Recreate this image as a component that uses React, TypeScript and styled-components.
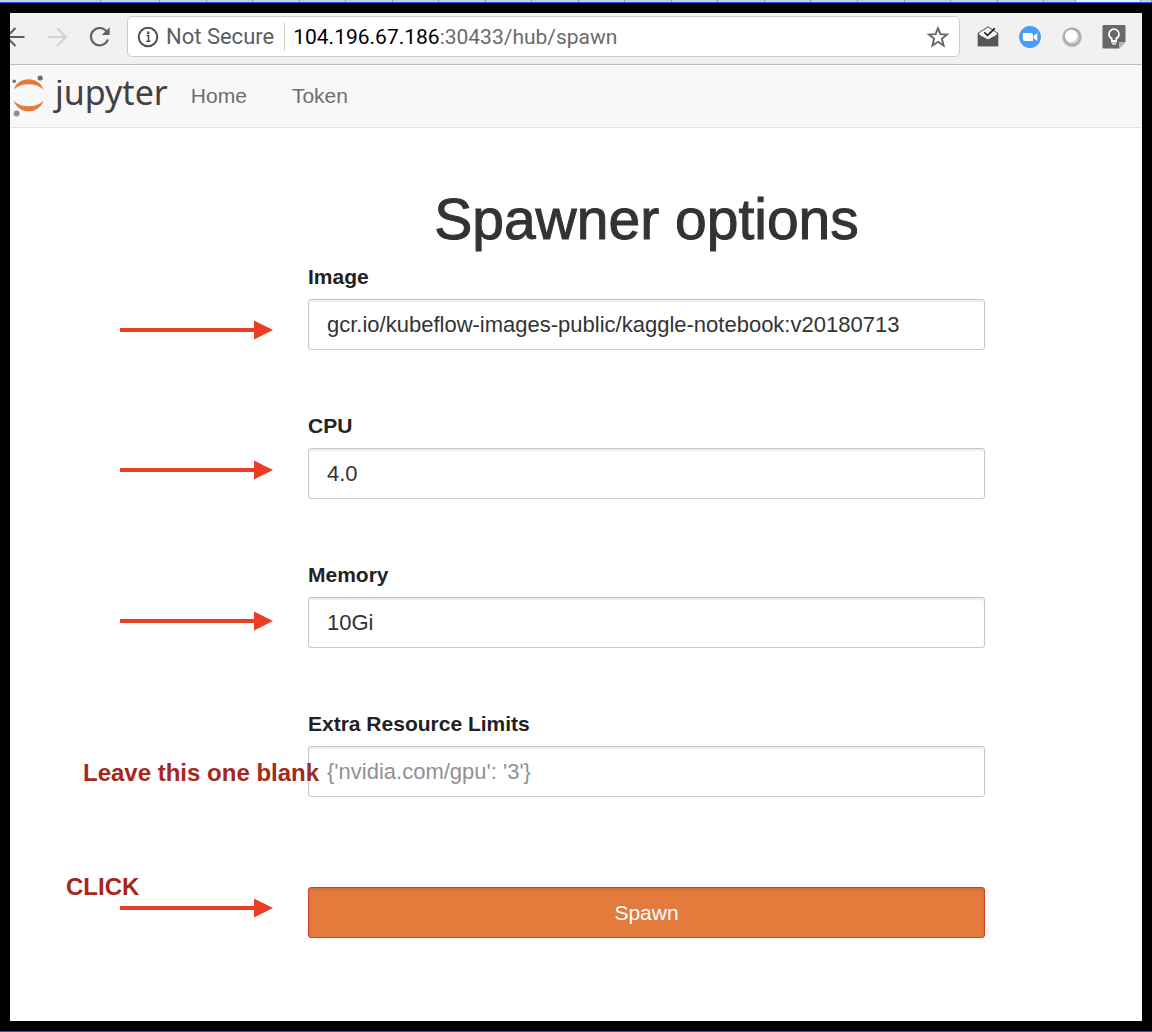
import React from "react";
import styled, { createGlobalStyle } from "styled-components";

const sans = `"Liberation Sans", Arial, Helvetica, sans-serif`;
const chromeFont = `Roboto, "Liberation Sans", sans-serif`;

const GlobalStyle = createGlobalStyle`
  *, *::before, *::after { box-sizing: border-box; }
  body { margin: 0; background: #000; font-family: ${sans}; color: #333; }
`;

const Desktop = styled.div`
  display: flex;
  flex-direction: column;
  min-height: 100vh;
  background: #000;
  border-bottom: 1px solid #2a55c8;
`;

const TabStrip = styled.div`
  display: flex;
  height: 3px;
  background: #cfd2d8;
  border-bottom: 1px solid #1f55f0;
`;

const Tab = styled.span<{ $width?: number; $active?: boolean }>`
  flex: ${(p) => (p.$width ? `0 0 ${p.$width}px` : "1 1 0")};
  background: ${(p) => (p.$active ? "#f3f3f5" : "transparent")};
  border-right: 1px solid #9a9da4;
`;

const Window = styled.div`
  position: relative;
  flex: 1;
  margin: 10px;
  background: #fff;
  overflow: hidden;
`;

const Toolbar = styled.div`
  display: flex;
  align-items: center;
  height: 52px;
  padding-bottom: 4px;
  background: #f1f1f1;
  border-bottom: 1px solid #bdbdbd;
`;

const ToolButton = styled.button<{ $width: number }>`
  display: flex;
  flex: 0 0 ${(p) => p.$width}px;
  align-items: center;
  height: 42px;
  padding: 0;
  border: 0;
  background: none;
  justify-content: ${(p) => (p.$width === 42 ? "center" : "flex-start")};
`;

const AddressBar = styled.div`
  display: flex;
  flex: 1;
  align-items: center;
  height: 41px;
  margin-right: 7px;
  padding-left: 9px;
  border: 1px solid #cdcdcd;
  border-radius: 5px;
  background: #fff;
  font: 22px/28px ${chromeFont};
  color: #5a5d63;
`;

const Security = styled.span`
  margin-left: 7px;
  padding-right: 10px;
  border-right: 1px solid #cfcfcf;
`;

const Address = styled.span`
  flex: 1;
  margin-left: 8px;
  color: #6a6a6a;
  font-size: 21px;
`;

const Host = styled.span`
  color: #000;
`;

const Extensions = styled.div`
  display: flex;
  margin-right: 7px;
`;

const Navbar = styled.nav`
  display: flex;
  align-items: center;
  height: 63px;
  background: #f8f8f8;
  border-bottom: 1px solid #e4e4e4;
  font-size: 21px;
  line-height: 30px;
`;

const Brand = styled.a`
  display: flex;
  align-items: center;
  margin-right: 23px;
  color: #414042;
  text-decoration: none;
`;

/* The wordmark has no dot on its j: the top of the line box is clipped. */
const Wordmark = styled.span`
  margin-left: 9px;
  padding-bottom: 8px;
  clip-path: inset(11px 0 0 -8px);
  font: 34px/46px "Noto Sans", "Open Sans", sans-serif;
`;

const NavLink = styled.a`
  margin-right: 45px;
  color: #6e6e6e;
  text-decoration: none;
`;

const Spawner = styled.main`
  display: grid;
  grid-template-columns: 298fr 677fr 157fr;
  padding: 60px 0;
`;

const Form = styled.form`
  grid-column: 2;
`;

const Title = styled.h1`
  margin: 0 0 12px;
  font-size: 57px;
  font-weight: 400;
  line-height: 62px;
  text-align: center;
  -webkit-text-stroke: 1px #333;
`;

const Group = styled.div`
  margin-bottom: 61px;
`;

const Label = styled.label`
  display: block;
  margin-bottom: 7px;
  color: #222;
  font-size: 21px;
  font-weight: 700;
  line-height: 30px;
`;

const Input = styled.input`
  display: block;
  width: 100%;
  height: 51px;
  padding: 0 18px;
  border: 1px solid #c6c6c6;
  border-radius: 3px;
  background: #fff;
  box-shadow: inset 0 2px 2px rgba(0, 0, 0, 0.07);
  color: #333;
  font: 22px/30px ${sans};
  &::placeholder { color: #919191; opacity: 1; }
`;

const Submit = styled.button`
  width: 100%;
  height: 51px;
  margin-top: 29px;
  border: 1px solid #d2402a;
  border-radius: 3px;
  background: #e47a3c;
  box-shadow: inset 0 2px 3px rgba(0, 0, 0, 0.1);
  color: #fff;
  font: 21px/30px ${sans};
`;

/* Hand-placed mark-up drawn over the window. */
const ArrowMark = styled.svg<{ $top: number }>`
  position: absolute;
  left: 110px;
  top: ${(p) => p.$top}px;
`;

const Note = styled.span<{ $left: number; $top: number }>`
  position: absolute;
  left: ${(p) => p.$left}px;
  top: ${(p) => p.$top}px;
  color: #a5281b;
  font-size: 24px;
  font-weight: 700;
  line-height: 28px;
  white-space: nowrap;
`;

const BackIcon = () => (
  <svg width="16" height="22" viewBox="0 0 16 22" fill="none" stroke="#5a5d63" strokeWidth="2">
    <path d="M14.500 11H-4M5.500 2L-3.500 11L5.500 20" />
  </svg>
);

const ForwardIcon = () => (
  <svg width="20" height="22" viewBox="0 0 20 22" fill="none" stroke="#d3d3d3" strokeWidth="2.200">
    <path d="M0 11H18M9 2L18 11L9 20" />
  </svg>
);

const ReloadIcon = () => (
  <svg width="22" height="22" viewBox="0 0 22 22" fill="none">
    <path d="M18.900 13.500A8.700 8.700 0 1 1 17.500 5.300" stroke="#5f6267" strokeWidth="2.200" />
    <path d="M20.700 1.200V9H12.700Z" fill="#5f6267" />
  </svg>
);

const InfoIcon = () => (
  <svg width="22" height="22" viewBox="0 0 22 22" fill="none">
    <circle cx="11" cy="11" r="9.300" stroke="#4c4f54" strokeWidth="2" />
    <path d="M9.500 9.500H11.500V15M9.300 15.300H13.500" stroke="#4c4f54" strokeWidth="1.600" />
    <rect x="10" y="5.500" width="2.400" height="2.400" fill="#4c4f54" />
  </svg>
);

const StarIcon = () => (
  <svg width="24" height="24" viewBox="0 0 24 24" fill="none">
    <path
      d="M12 3.200L14.400 9.200L21 9.600L15.900 13.800L17.600 20.500L12 16.800L6.400 20.500L8.100 13.800L3 9.600L9.600 9.200Z"
      stroke="#63666b"
      strokeWidth="1.900"
    />
  </svg>
);

const MailIcon = () => (
  <svg width="24" height="24" viewBox="0 0 24 24">
    <path d="M1.800 8L12 1.300L22.200 8V21.300H1.800Z" fill="#5a5a5a" />
    <path d="M3 8.200L12 2.400L21 8.200L20.500 10L12 14.500L3.500 10Z" fill="#f6f6f6" />
    <path d="M1.800 9.300L12 14.800L22.200 9.300V21.300H1.800Z" fill="#575757" />
    <path d="M8.300 7.300L11.600 10.300L18.800 3.300" fill="none" stroke="#222" strokeWidth="1.700" />
  </svg>
);

const CameraIcon = () => (
  <svg width="24" height="24" viewBox="0 0 24 24">
    <circle cx="12" cy="12" r="10.900" fill="#4a9bf8" />
    <path d="M4.800 8H13Q15 8 15 10V16H7Q4.800 16 4.800 14Z" fill="#fff" />
    <path d="M15.700 10.800L19.300 8V16L15.700 13.300Z" fill="#fff" />
  </svg>
);

const OrbIcon = () => (
  <svg width="24" height="24" viewBox="0 0 24 24">
    <circle cx="12" cy="12.500" r="10.200" fill="#e2e2e2" />
    <circle cx="12" cy="12" r="9.400" fill="#aaa" />
    <circle cx="12.300" cy="12.300" r="7" fill="#cfcfcf" />
    <circle cx="11.200" cy="11" r="6.200" fill="#fff" />
  </svg>
);

const BulbIcon = () => (
  <svg width="24" height="24" viewBox="0 0 24 24">
    <path d="M1.800 0H22.200Q23.500 0 23.500 1.300V17L17 23.500H1.800Q.5 23.500 .5 22.200V1.300Q.5 0 1.800 0Z" fill="#696969" />
    <path d="M17 17H23.500L17 23.500Z" fill="#b3b3b3" />
    <path
      d="M9.800 14.500V13.600Q7 12.200 7 9.200A5 5 0 0 1 17 9.200Q17 12.200 14.200 13.600V16H9.800Z"
      fill="none"
      stroke="#fff"
      strokeWidth="1.700"
    />
    <path d="M9 15H15V17.500H9ZM10 18.300H14V19.600H10Z" fill="#fff" />
  </svg>
);

const JupyterMark = () => (
  <svg width="36" height="46" viewBox="0 0 36 46">
    <path d="M3.700 16.500C6 10 12 6.300 18.500 6.300S31.200 10 33.500 16.500C29.500 12.800 24.500 11.200 18.500 11.200S7.500 12.800 3.700 16.500Z" fill="#e47a3c" />
    <path d="M3.700 27.700C7.500 31.500 12.500 33.200 18.500 33.200S29.500 31.500 33.500 27.700C31.200 34.500 25 38.300 18.500 38.300S6 34.500 3.700 27.700Z" fill="#e47a3c" />
    <circle cx="30.200" cy="5" r="2.600" fill="#6d6e71" />
    <circle cx="4.200" cy="8.300" r="1.800" fill="#6d6e71" />
    <circle cx="6.600" cy="40.600" r="3" fill="#919191" />
  </svg>
);

const Arrow = ({ top }: { top: number }) => (
  <ArrowMark $top={top} width="154" height="20" viewBox="0 0 154 20" aria-hidden="true">
    <rect x="0" y="8" width="136" height="4" fill="#ea3d25" />
    <path d="M134 .5L153 10L134 19.500Z" fill="#ea3d25" />
  </ArrowMark>
);

const fields = [
  { id: "image", label: "Image", value: "gcr.io/kubeflow-images-public/kaggle-notebook:v20180713" },
  { id: "cpu", label: "CPU", value: "4.0" },
  { id: "memory", label: "Memory", value: "10Gi" },
  { id: "extra", label: "Extra Resource Limits", placeholder: "{'nvidia.com/gpu': '3'}" },
];

const extensions = [
  { name: "Inbox", Icon: MailIcon },
  { name: "Meetings", Icon: CameraIcon },
  { name: "Status", Icon: OrbIcon },
  { name: "Notes", Icon: BulbIcon },
];

export default function App() {
  return (
    <Desktop>
      <GlobalStyle />
      <TabStrip aria-hidden="true">
        <Tab $width={101} />
        <Tab $width={59} />
        {Array.from({ length: 19 }, (_, i) => (
          <Tab key={i} />
        ))}
        <Tab $width={32} />
        <Tab $width={65} $active />
        <Tab $width={11} />
      </TabStrip>
      <Window>
        <Toolbar>
          <ToolButton $width={38} aria-label="Back"><BackIcon /></ToolButton>
          <ToolButton $width={41} aria-label="Forward"><ForwardIcon /></ToolButton>
          <ToolButton $width={38} aria-label="Reload"><ReloadIcon /></ToolButton>
          <AddressBar>
            <InfoIcon />
            <Security>Not Secure</Security>
            <Address><Host>104.196.67.186</Host>:30433/hub/spawn</Address>
            <ToolButton $width={42} aria-label="Bookmark"><StarIcon /></ToolButton>
          </AddressBar>
          <Extensions>
            {extensions.map(({ name, Icon }) => (
              <ToolButton key={name} $width={42} aria-label={name}><Icon /></ToolButton>
            ))}
          </Extensions>
        </Toolbar>
        <Navbar>
          <Brand href="#">
            <JupyterMark />
            <Wordmark>jupyter</Wordmark>
          </Brand>
          <NavLink href="#home">Home</NavLink>
          <NavLink href="#token">Token</NavLink>
        </Navbar>
        <Spawner>
          <Form onSubmit={(e) => e.preventDefault()}>
            <Title>Spawner options</Title>
            {fields.map((f) => (
              <Group key={f.id}>
                <Label htmlFor={f.id}>{f.label}</Label>
                <Input id={f.id} type="text" defaultValue={f.value} placeholder={f.placeholder} spellCheck={false} />
              </Group>
            ))}
            <Submit type="submit">Spawn</Submit>
          </Form>
        </Spawner>
        <Arrow top={307} />
        <Arrow top={447} />
        <Arrow top={598} />
        <Note $left={73} $top={746}>Leave this one blank</Note>
        <Note $left={56} $top={860}>CLICK</Note>
        <Arrow top={885} />
      </Window>
    </Desktop>
  );
}
